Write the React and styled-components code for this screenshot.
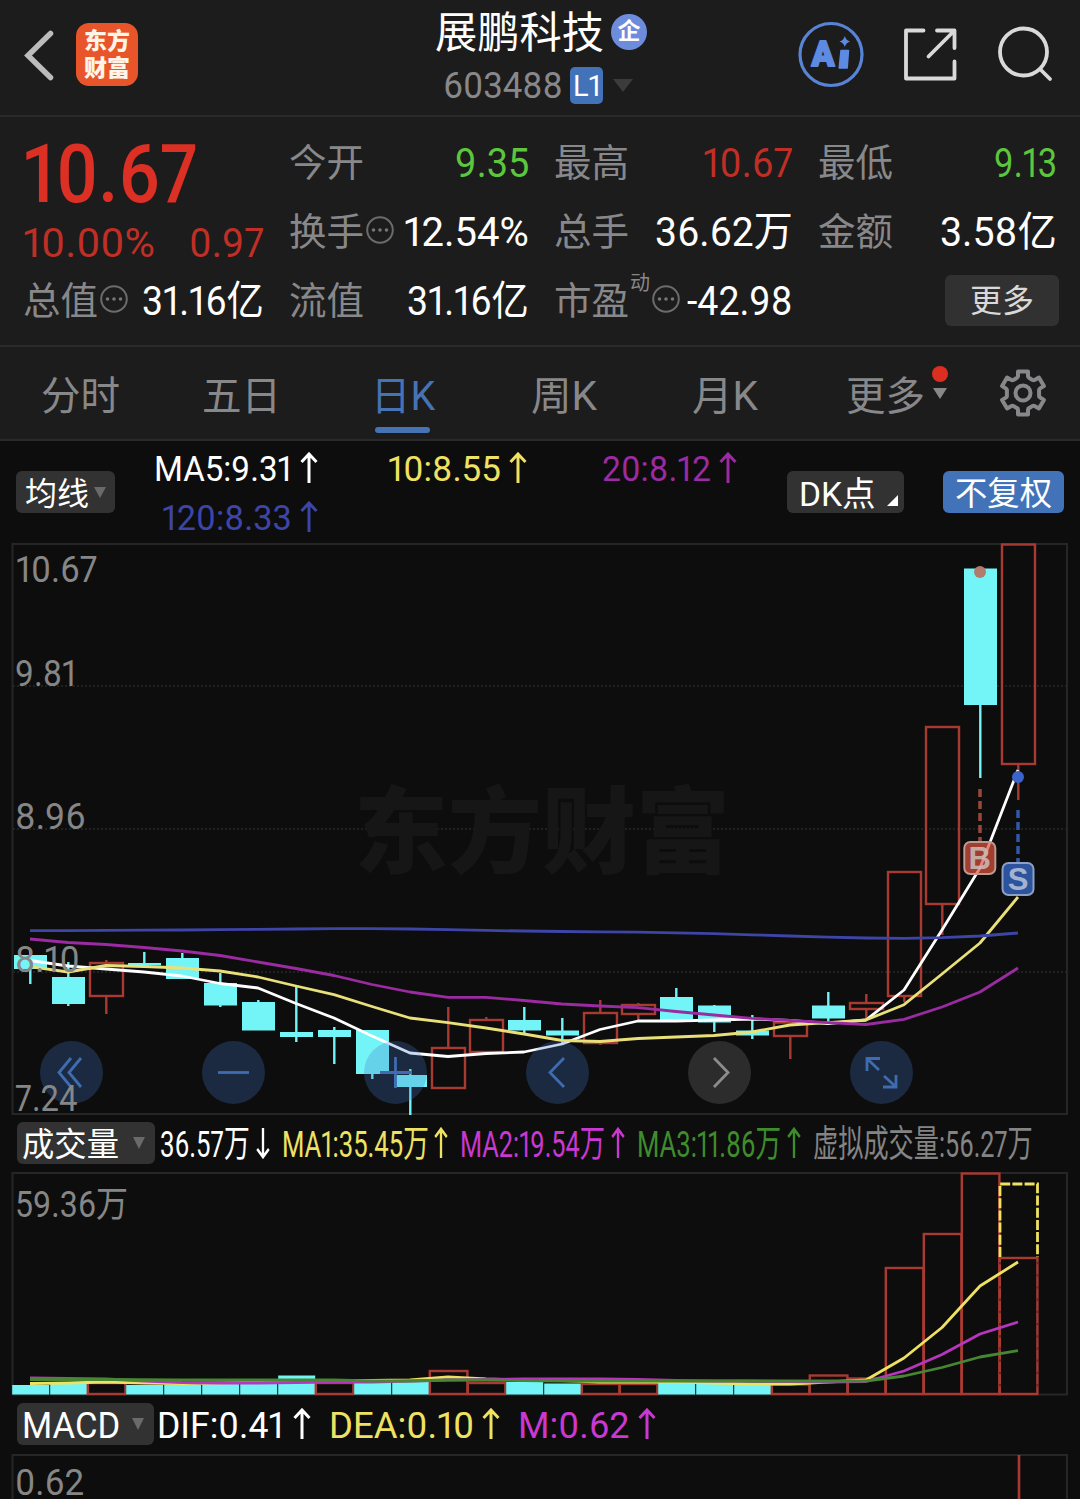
import React, { useLayoutEffect, useRef, useState } from 'react';
import styled, { createGlobalStyle, css } from 'styled-components';

const GlobalStyle = createGlobalStyle`
  body {
    margin: 0;
    background: #0d0d0d;
    color: #fff;
    font-family: Roboto, 'Noto Sans CJK SC', sans-serif;
    font-variant-numeric: proportional-nums;
  }
`;

const color = {
  panel: '#1c1c1c',
  line: '#2a2a2a',
  label: '#88888a',
  red: '#bf2f26',
  green: '#5cc63c',
  blue: '#4273b9',
  yellow: '#efe262',
  magenta: '#c938d1',
  purple: '#9a2ba1',
  navy: '#3d45a6',
  lime: '#3f8c2c',
  cyan: '#73f5f7',
  candle: '#a83a32',
};

const FitBox = styled.span`
  display: block;
  flex: none;
  white-space: nowrap;
  width: ${(p) => p.$w}px;
  margin-left: ${(p) => p.$ml || 0}px;
  padding-top: var(--drop, 5px);
  font-size: ${(p) => p.$size}px;
  font-weight: ${(p) => p.$weight || 400};
  line-height: ${(p) => p.$lh || 1.1};
  color: ${(p) => p.$color || 'inherit'};
`;

const FitInner = styled.span`
  display: inline-block;
  transform-origin: left center;
`;

// squeezes a text horizontally so that it takes exactly w pixels
function Fit({ w, size, c, ml, lh, weight, children }) {
  const ref = useRef(null);
  const [scale, setScale] = useState(1);
  useLayoutEffect(() => {
    setScale(w / ref.current.offsetWidth);
  }, [w, children]);
  return (
    <FitBox $w={w} $size={size} $color={c} $ml={ml} $lh={lh} $weight={weight}>
      <FitInner ref={ref} style={{ transform: `scaleX(${scale})` }}>
        {children}
      </FitInner>
    </FitBox>
  );
}

const Page = styled.div`
  width: 1080px;
  height: 1499px;
  overflow: hidden;
  display: flex;
  flex-direction: column;
`;

/* header */

const Header = styled.header`
  box-sizing: border-box;
  height: 117px;
  flex: none;
  display: grid;
  grid-template-columns: 432px 1fr 290px;
  background: ${color.panel};
  border-bottom: 2px solid ${color.line};
`;

const HeaderLeft = styled.div`
  display: flex;
  align-items: center;
  gap: 22px;
  padding: 0 0 6px 22px;
`;

const Logo = styled.div`
  box-sizing: border-box;
  width: 62px;
  height: 63px;
  padding-top: 6px;
  border-radius: 13px;
  background: #e8552a;
  color: #fff4e6;
  font-size: 23px;
  line-height: 26.5px;
  font-weight: 900;
  text-align: center;
`;

const Title = styled.div`
  padding-top: 9px;
`;

const TitleRow = styled.div`
  --drop: 4px;
  display: flex;
  align-items: center;
  height: ${(p) => p.$h}px;
  padding-left: ${(p) => p.$pl || 0}px;
`;

const CorpBadge = styled.span`
  width: 36px;
  height: 36px;
  margin-left: 7px;
  border-radius: 50%;
  background: #6d8cdc;
  font-size: 23px;
  font-weight: 700;
  line-height: 36px;
  text-align: center;
`;

const Level = styled.span`
  --drop: 0px;
  display: flex;
  align-items: center;
  justify-content: center;
  width: 33px;
  height: 37px;
  margin: 0 10px 0 7px;
  border-radius: 5px;
  background: #4273b9;
`;

const HeaderRight = styled.div`
  padding-top: 15px;
`;

/* quote */

const Quote = styled.section`
  --drop: 2px;
  box-sizing: border-box;
  height: 230px;
  flex: none;
  display: grid;
  grid-template-columns: 241px 240px 239px 239px;
  grid-template-rows: 69px 69px 69px;
  column-gap: 25px;
  padding: 11px 23px 0;
  background: ${color.panel};
  border-bottom: 2px solid ${color.line};
`;

const PriceBlock = styled.div`
  grid-row: span 2;
  display: flex;
  flex-direction: column;
`;

const PriceRow = styled.div`
  display: flex;
  align-items: center;
  justify-content: space-between;
  height: ${(p) => p.$h}px;
`;

const Cell = styled.div`
  display: flex;
  align-items: center;
  justify-content: space-between;
`;

const Label = styled.div`
  display: flex;
  align-items: center;
  color: ${color.label};
  svg { margin-left: 2px; margin-bottom: 3px; }
`;

const Sup = styled.sup`
  align-self: flex-start;
  margin-top: -6px;
  margin-left: 1px;
  font-size: 20px;
  line-height: 20px;
`;

const MoreButton = styled.button`
  justify-self: end;
  align-self: center;
  margin-right: -2px;
  width: 114px;
  height: 51px;
  padding: 0;
  border: 0;
  border-radius: 6px;
  background: #313131;
  color: #d9d9d9;
  font: 400 32px 'Noto Sans CJK SC', sans-serif;
  line-height: 44px;
  padding-bottom: 5px;
`;

/* tabs */

const Tabs = styled.nav`
  --drop: 12px;
  box-sizing: border-box;
  height: 94px;
  flex: none;
  display: flex;
  background: ${color.panel};
  border-bottom: 2px solid ${color.line};
`;

const Tab = styled.div`
  position: relative;
  display: flex;
  justify-content: center;
  align-items: center;
  width: 161px;
  padding-bottom: 4px;
  color: ${color.label};
  ${(p) => p.$active && css`
    color: #4673b4;
    &::after {
      content: '';
      position: absolute;
      left: 53px;
      bottom: 6px;
      width: 55px;
      height: 6px;
      border-radius: 3px;
      background: #4673b4;
    }
  `}
`;

const RedDot = styled.i`
  position: absolute;
  left: 127px;
  top: 19px;
  width: 16px;
  height: 16px;
  border-radius: 50%;
  background: #dc2f22;
`;

const TabCaret = styled.i`
  position: absolute;
  left: 128px;
  top: 41px;
  border: 7px solid transparent;
  border-top: 11px solid ${color.label};
  border-bottom: 0;
`;

const GearBox = styled.div`
  width: 114px;
  display: flex;
  align-items: center;
  justify-content: center;
`;

/* indicator rows */

const Legend = styled.div`
  box-sizing: border-box;
  flex: none;
  height: ${(p) => p.$h}px;
  display: flex;
  align-items: center;
  padding-left: 16px;
  padding-right: 16px;
`;

const Chip = styled.div`
  box-sizing: border-box;
  flex: none;
  display: flex;
  align-items: center;
  width: ${(p) => p.$w}px;
  height: 42px;
  margin-left: ${(p) => p.$ml || 0}px;
  padding-left: ${(p) => p.$pl}px;
  border-radius: 6px;
  background: ${(p) => p.$bg || '#323232'};
`;

const Caret = styled.i`
  margin-left: ${(p) => p.$ml}px;
  border: ${(p) => p.$s || 6.5}px solid transparent;
  border-top: ${(p) => p.$t || 12}px solid ${(p) => p.$color || '#6a6a6a'};
  border-bottom: 0;
`;

const Corner = styled.i`
  align-self: flex-end;
  margin: 0 0 7px 11px;
  border-left: 11px solid transparent;
  border-bottom: 11px solid #fff;
`;

const Averages = styled.div`
  display: grid;
  grid-template-columns: 232px 215px 185px;
  grid-auto-rows: 49px;
  margin-left: 39px;
  width: 632px;
`;

const Item = styled.div`
  display: flex;
  align-items: center;
  color: ${(p) => p.$color};
`;

const ArrowSvg = styled.svg`
  flex: none;
  margin-left: ${(p) => p.$ml}px;
  ${(p) => p.$down && 'transform: rotate(180deg);'}
`;

function Arrow({ ml, w = 18, down }) {
  return (
    <ArrowSvg $ml={ml} $down={down} width={w} height="32" viewBox="0 0 18 32" preserveAspectRatio="none"
      fill="none" stroke="currentColor" strokeWidth="3">
      <path d="M9 31V2M1.5 10L9 2l7.5 8" />
    </ArrowSvg>
  );
}

/* charts */

const ChartBox = styled.div`
  --drop: 0px;
  position: relative;
  flex: none;
  height: ${(p) => p.$h}px;
  svg { display: block; }
`;

const Controls = styled.div`
  position: absolute;
  left: 40px;
  top: 498px;
  display: flex;
  gap: 99px;
`;

const RoundButton = styled.div`
  width: 63px;
  height: 63px;
  border-radius: 50%;
  background: ${(p) => (p.$off ? 'rgba(125, 125, 125, 0.28)' : 'rgba(66, 118, 196, 0.28)')};
  color: ${(p) => (p.$off ? '#8c8c8c' : '#3f6cb0')};
`;

const PriceLabels = styled.div`
  position: absolute;
  left: 15px;
  top: ${(p) => p.$top}px;
  color: #868686;
`;

const X = (i) => 30 + i * 38;

// [up, body top, body bottom, high, low]
const candles = [
  [0, 955, 969, 950, 984], [0, 977, 1004, 962, 1006], [1, 963, 996, 960, 1014],
  [0, 963, 965.5, 952, 965], [0, 958, 979, 953, 979], [0, 983, 1005.5, 973, 1007],
  [0, 1002, 1030.5, 1000, 1030], [0, 1032, 1037, 987, 1042], [0, 1030, 1037, 1027, 1064],
  [0, 1030, 1074, 1030, 1079], [0, 1075, 1087, 1069, 1115], [1, 1048, 1088, 1007, 1089],
  [1, 1020, 1052, 1017, 1052], [0, 1020, 1030.5, 1007, 1035], [0, 1030.5, 1035.5, 1018, 1043],
  [1, 1013, 1043, 1000, 1045], [1, 1005, 1014, 1003, 1020], [0, 997, 1020, 988, 1020],
  [0, 1005.5, 1022.5, 1005, 1032], [0, 1030.5, 1035.5, 1015, 1039], [1, 1022.5, 1036, 1019, 1059],
  [0, 1005.5, 1018.5, 992, 1022], [1, 1003, 1009, 994, 1020], [1, 872, 996, 872, 1002],
  [1, 727, 904, 727, 935], [0, 568.5, 705, 568, 778], [1, 544.5, 764, 545, 800],
];

const ma5 = [960.5, 966, 969, 972, 976, 983.5, 988, 1003.5, 1018, 1036, 1053, 1056.5, 1053.5, 1052, 1044, 1029.5, 1021, 1021, 1020, 1019, 1020.5, 1023.5, 1020, 990, 930, 868, 770];
const ma10 = [966.7, 972, 965.5, 966.5, 968, 971, 977, 986, 994.7, 1006.5, 1018, 1022.7, 1028, 1034, 1040.5, 1041.5, 1038.5, 1037, 1035.5, 1032, 1025, 1022.7, 1020, 1004.7, 974, 943, 897];
const ma20 = [939, 942.5, 944.5, 947.5, 951, 955.5, 962, 968.5, 975.5, 984.5, 992, 997.3, 997.3, 1000.5, 1004, 1006, 1007.7, 1011.5, 1015, 1018.3, 1020.5, 1022.7, 1024.5, 1019.3, 1007, 992, 968];
const ma120 = [930.7, 930.6, 930.4, 930.2, 930, 929.6, 929.3, 929, 928.7, 928.6, 929, 929.7, 930.4, 931, 931.5, 931.8, 932.2, 932.8, 933.7, 934.8, 936, 937.2, 938, 938.3, 937.6, 936, 933];

const volumes = [
  [0, 1385], [0, 1384], [1, 1383], [0, 1385], [0, 1384.5], [0, 1384], [0, 1383], [0, 1375.5], [1, 1383],
  [0, 1382], [0, 1382], [1, 1371], [1, 1383], [0, 1382], [0, 1383.5], [1, 1384], [1, 1384], [0, 1383],
  [0, 1383.5], [0, 1385], [1, 1384.5], [1, 1375.5], [1, 1378.5], [1, 1268], [1, 1234], [1, 1173.5], [1, 1258],
];

const v1 = [1383.5, 1383, 1382, 1383, 1383.5, 1383, 1382, 1380.5, 1380.5, 1380.5, 1380, 1377, 1379, 1380, 1380.5, 1382, 1382, 1382, 1383, 1384, 1384, 1382, 1380, 1358, 1327.5, 1286, 1262];
const v2 = [1378, 1378.5, 1379, 1381, 1382.5, 1383, 1383, 1382.5, 1382, 1382, 1381, 1380, 1379.5, 1379, 1379, 1379, 1379.5, 1380.5, 1381, 1381, 1381.5, 1382, 1381.5, 1371, 1354.5, 1334, 1322];
const v3 = [1379.5, 1379.5, 1379.5, 1379.7, 1380, 1380, 1380, 1380, 1380, 1381, 1381, 1380, 1380, 1380.5, 1381, 1381, 1381, 1381, 1381, 1381, 1381, 1381, 1381, 1376, 1367.5, 1357, 1350.7];

const Line = ({ ys, c }) => (
  <polyline points={ys.map((y, i) => `${X(i)},${y}`).join(' ')} fill="none" stroke={c} strokeWidth="2.8" strokeLinejoin="round" />
);

function Marker({ x, y, fill, stroke, letter, ink }) {
  return (
    <g>
      <rect x={x - 15.5} y={y} width="31" height="32" rx="6" fill={fill} fillOpacity="0.7" stroke={stroke} strokeWidth="2" />
      <text x={x} y={y + 27} textAnchor="middle" fontFamily="Liberation Sans" fontWeight="700" fontSize="31" fill={ink} fillOpacity="0.9">{letter}</text>
    </g>
  );
}

function PriceChart() {
  return (
    <svg width="1080" height="573" viewBox="0 543 1080 573">
      <rect x="12.5" y="544" width="1054.5" height="570" fill="none" stroke="#262626" strokeWidth="2" />
      {[686, 829, 972].map((y) => (
        <path key={y} d={`M13 ${y}H1067`} stroke="#282828" strokeWidth="1.5" strokeDasharray="2 2" />
      ))}
      <text x="354" y="866" fontSize="94" fontWeight="900" fontFamily="Noto Sans CJK SC" fill="#161616">东方财富</text>
      {candles.map(([up, top, bottom, high, low], i) => {
        const x = X(i) + 0.3;
        return up ? (
          <g key={i} stroke={color.candle} strokeWidth="2.4" fill="none">
            <rect x={x - 16.3} y={top} width="33" height={bottom - top} />
            <path d={`M${x} ${high}V${top}M${x} ${bottom}V${low}`} />
          </g>
        ) : (
          <g key={i}>
            <rect x={x - 16.3} y={top} width="33" height={bottom - top} fill={color.cyan} />
            <path d={`M${x} ${high}V${low}`} stroke={color.cyan} strokeWidth="2.4" />
          </g>
        );
      })}
      <Line ys={ma5} c="#fff" />
      <Line ys={ma10} c="#eae07a" />
      <Line ys={ma20} c={color.purple} />
      <Line ys={ma120} c={color.navy} />
      <path d="M980 789V841" stroke="#98483a" strokeWidth="3.5" strokeDasharray="8 4" />
      <path d="M1018 810V862" stroke="#2f58a6" strokeWidth="3.5" strokeDasharray="8 4" />
      <circle cx="980" cy="572" r="6" fill="#b27c6d" />
      <circle cx="1018" cy="777" r="6" fill="#3b63c9" />
      <Marker x={979.8} y={842} fill="#e3543f" stroke="#bd9a92" letter="B" ink="#cdb9b5" />
      <Marker x={1018} y={863} fill="#3a72dc" stroke="#8d9fc4" letter="S" ink="#b4c0d8" />
    </svg>
  );
}

function VolumeChart() {
  return (
    <svg width="1080" height="224" viewBox="0 1172 1080 224">
      <rect x="12.5" y="1173" width="1054.5" height="221.5" fill="none" stroke="#262626" strokeWidth="2" />
      {volumes.map(([up, top], i) => {
        const x = 11.8 + i * 38;
        return up ? (
          <rect key={i} x={x} y={top} width="37.6" height={1394 - top} fill="none" stroke={color.candle} strokeWidth="2.4" />
        ) : (
          <rect key={i} x={x + 0.4} y={top} width="37" height={1394.5 - top} fill={color.cyan} />
        );
      })}
      <path d="M1000 1257V1184H1037.5V1257" fill="none" stroke={color.yellow} strokeWidth="2.8" strokeDasharray="10 2.2" />
      <path d="M1000 1262V1394M1037.5 1262V1394" fill="none" stroke="#5e2a22" strokeWidth="2" strokeDasharray="2.2 10" />
      <Line ys={v1} c={color.yellow} />
      <Line ys={v2} c="#b835be" />
      <Line ys={v3} c="#478632" />
    </svg>
  );
}

const Dots = () => (
  <svg width="28" height="28" viewBox="0 0 28 28" fill="none" stroke="#6b6b6d" strokeWidth="2">
    <circle cx="14" cy="14" r="12.8" />
    <path d="M7.5 14h0M14 14h0M20.5 14h0" strokeWidth="3.6" strokeLinecap="round" stroke="#77777a" />
  </svg>
);

const Gear = () => (
  <svg width="50" height="50" viewBox="0 0 50 50" fill="none" stroke={color.label} strokeWidth="4">
    <path strokeLinejoin="round" d="M20 3.5h10v4.8a2 2 0 0 0 1.3 1.8l3.2 1.8a2 2 0 0 0 2.1 0l4.3-2.4 5 8.6-3.8 2.3a2 2 0 0 0-1 1.8v5.6a2 2 0 0 0 1 1.8l3.8 2.3-5 8.6-4.3-2.4a2 2 0 0 0-2.1 0l-3.2 1.8a2 2 0 0 0-1.3 1.8v4.8H20v-4.8a2 2 0 0 0-1.3-1.8l-3.2-1.8a2 2 0 0 0-2.1 0l-4.3 2.4-5-8.6 3.8-2.3a2 2 0 0 0 1-1.8v-5.6a2 2 0 0 0-1-1.8l-3.8-2.3 5-8.6 4.3 2.4a2 2 0 0 0 2.1 0l3.2-1.8A2 2 0 0 0 20 8.3z" />
    <circle cx="25" cy="25" r="7.5" />
  </svg>
);

const HeaderIcons = () => (
  <svg width="290" height="80" viewBox="790 15 290 80" fill="none">
    <circle cx="831" cy="54.5" r="31" stroke="#5784d4" strokeWidth="3.2" />
    <text x="811.5" y="65.5" fontFamily="Roboto" fontWeight="900" fontSize="35.5" fill="#5d8ae2" stroke="#5d8ae2"
      strokeWidth="1.8" strokeLinejoin="round" textLength="23" lengthAdjust="spacingAndGlyphs">A</text>
    <path d="M841 50.500h7.500l-1.300 17.500h-8z" fill="#5d8ae2" stroke="#5d8ae2" strokeWidth="1.500" strokeLinejoin="round" />
    <path d="M844.800 36q1.200 4.500 5.400 5.500q-4.200 1-5.400 5.500q-1.200-4.500-5.400-5.500q4.200-1 5.400-5.500z" fill="#5d8ae2" />
    <g stroke="#d9d9d9" strokeWidth="3.8" strokeLinecap="round" strokeLinejoin="round">
      <path d="M923.500 30.500H906V78.500H954.500V61.500M937 30.500H954.500V48M953.500 31.500L928.500 56.500" />
      <circle cx="1023.500" cy="52" r="23.500" />
      <path d="M1040.500 69.500L1050 79" />
    </g>
  </svg>
);

const tabs = [['分时', 79], ['五日', 79], ['日K', 64], ['周K', 66], ['月K', 66], ['更多', 79]];

const icons = [
  'M31 17L19 31.500L31 46M41 17L29 31.500L41 46',
  'M16 31.500H47',
  'M16 31.500H47M31.500 16V47',
  'M38 17L24 31.500L38 46',
  'M26 17L40 31.500L26 46',
  'M17 30V17.500H30M18 18.500L29 29M46 34V46H33M45 45L34 35',
];

export default function App() {
  return (
    <Page>
      <GlobalStyle />
      <Header>
        <HeaderLeft>
          <svg width="32" height="54" viewBox="22 27 32 54" fill="none">
            <path d="M50.500 32.500L28 54.500L50.500 76.500" stroke="#bcbcbc" strokeWidth="5.500" strokeLinecap="round" />
          </svg>
          <Logo>东方<br />财富</Logo>
        </HeaderLeft>
        <Title>
          <TitleRow $h={46} $pl={3}>
            <Fit w={169} size={43}>展鹏科技</Fit>
            <CorpBadge>企</CorpBadge>
          </TitleRow>
          <TitleRow $h={60} $pl={11}>
            <Fit w={120} size={36} c={color.label}>603488</Fit>
            <Level><Fit w={28} size={30}>L1</Fit></Level>
            <Caret $ml={0} $s={10} $t={13} $color="#3b3b3b" />
          </TitleRow>
        </Title>
        <HeaderRight><HeaderIcons /></HeaderRight>
      </Header>

      <Quote>
        <PriceBlock>
          <PriceRow $h={91}><Fit w={175} size={81} weight={500} c="#dc3024">10.67</Fit></PriceRow>
          <PriceRow $h={47}>
            <Fit w={132} size={40} c={color.red}>10.00%</Fit>
            <Fit w={75} size={40} c={color.red}>0.97</Fit>
          </PriceRow>
        </PriceBlock>
        <Cell><Label><Fit w={75} size={38}>今开</Fit></Label><Fit w={74} size={41} c={color.green}>9.35</Fit></Cell>
        <Cell><Label><Fit w={75} size={38}>最高</Fit></Label><Fit w={90} size={41} c={color.red}>10.67</Fit></Cell>
        <Cell><Label><Fit w={75} size={38}>最低</Fit></Label><Fit w={63} size={41} c={color.green}>9.13</Fit></Cell>
        <Cell><Label><Fit w={75} size={38}>换手</Fit><Dots /></Label><Fit w={125} size={41}>12.54%</Fit></Cell>
        <Cell><Label><Fit w={75} size={38}>总手</Fit></Label><Fit w={138} size={41}>36.62万</Fit></Cell>
        <Cell><Label><Fit w={75} size={38}>金额</Fit></Label><Fit w={117} size={41}>3.58亿</Fit></Cell>
        <Cell><Label><Fit w={75} size={38}>总值</Fit><Dots /></Label><Fit w={122} size={41}>31.16亿</Fit></Cell>
        <Cell><Label><Fit w={75} size={38}>流值</Fit></Label><Fit w={122} size={41}>31.16亿</Fit></Cell>
        <Cell>
          <Label><Fit w={75} size={38}>市盈</Fit><Sup>动</Sup><Dots /></Label>
          <Fit w={106} size={41}>-42.98</Fit>
        </Cell>
        <MoreButton>更多</MoreButton>
      </Quote>

      <Tabs>
        {tabs.map(([name, w], i) => (
          <Tab key={name} $active={i === 2}>
            <Fit w={w} size={40}>{name}</Fit>
            {i === 5 && <><RedDot /><TabCaret /></>}
          </Tab>
        ))}
        <GearBox><Gear /></GearBox>
      </Tabs>

      <Legend $h={102}>
        <Chip $w={99} $pl={9}><Fit w={64} size={32}>均线</Fit><Caret $ml={5} $t={11} /></Chip>
        <Averages>
          <Item $color="#fff"><Fit w={138} size={35}>MA5:9.31</Fit><Arrow ml={8} /></Item>
          <Item $color={color.yellow}><Fit w={113} ml={2} size={35}>10:8.55</Fit><Arrow ml={8} /></Item>
          <Item $color={color.purple}><Fit w={109} ml={1} size={35}>20:8.12</Fit><Arrow ml={8} /></Item>
          <Item $color={color.navy}><Fit w={130} ml={8} size={35}>120:8.33</Fit><Arrow ml={8} /></Item>
        </Averages>
        <Chip $w={117} $ml={0.5} $pl={12}><Fit w={77} size={34}>DK点</Fit><Corner /></Chip>
        <Chip $w={121} $ml={39.5} $pl={12} $bg="#4273b9"><Fit w={97} size={33}>不复权</Fit></Chip>
      </Legend>

      <ChartBox $h={571}>
        <PriceChart />
        <Controls>
          {icons.map((d, i) => (
            <RoundButton key={d} $off={i === 4}>
              <svg width="63" height="63" fill="none" stroke="currentColor" strokeWidth="2.800"><path d={d} /></svg>
            </RoundButton>
          ))}
        </Controls>
        <PriceLabels $top={7}><Fit w={82} ml={1} size={37}>10.67</Fit></PriceLabels>
        <PriceLabels $top={111}><Fit w={62} size={37}>9.81</Fit></PriceLabels>
        <PriceLabels $top={254}><Fit w={71} size={37}>8.96</Fit></PriceLabels>
        <PriceLabels $top={397}><Fit w={65} size={37}>8.10</Fit></PriceLabels>
        <PriceLabels $top={536}><Fit w={62} size={37}>7.24</Fit></PriceLabels>
      </ChartBox>

      <Legend $h={58}>
        <Chip $w={138} $pl={5} $ml={0.5}><Fit w={97} size={33}>成交量</Fit><Caret $ml={14} /></Chip>
        <Item $color="#fff"><Fit w={90} ml={5} size={37}>36.57万</Fit><Arrow ml={6} w={14} down /></Item>
        <Item $color={color.yellow}><Fit w={147} ml={12} size={37}>MA1:35.45万</Fit><Arrow ml={5} w={14} /></Item>
        <Item $color={color.magenta}><Fit w={145} ml={12} size={37}>MA2:19.54万</Fit><Arrow ml={6} w={14} /></Item>
        <Item $color={color.lime}><Fit w={144} ml={12} size={37}>MA3:11.86万</Fit><Arrow ml={6} w={14} /></Item>
        <Item $color="#848484"><Fit w={220} ml={12} size={37}>虚拟成交量:56.27万</Fit></Item>
      </Legend>

      <ChartBox $h={222}>
        <VolumeChart />
        <PriceLabels $top={14}><Fit w={113} size={36}>59.36万</Fit></PriceLabels>
      </ChartBox>

      <Legend $h={60}>
        <Chip $w={137} $pl={5} $ml={0.5}><Fit w={98} size={36}>MACD</Fit><Caret $ml={12} /></Chip>
        <Item $color="#fff"><Fit w={127} ml={3} size={37}>DIF:0.41</Fit><Arrow ml={9} /></Item>
        <Item $color={color.yellow}><Fit w={145} ml={18} size={37}>DEA:0.10</Fit><Arrow ml={8} /></Item>
        <Item $color={color.magenta}><Fit w={112} ml={18} size={37}>M:0.62</Fit><Arrow ml={8} /></Item>
      </Legend>

      <ChartBox $h={46}>
        <svg width="1080" height="46" viewBox="0 1453 1080 46">
          <path d="M12.500 1499V1454H1067V1499" fill="none" stroke="#262626" strokeWidth="2" />
          <path d="M1019 1454V1499" stroke={color.candle} strokeWidth="2.600" />
        </svg>
        <PriceLabels $top={13}><Fit w={69} size={37} lh={0.85}>0.62</Fit></PriceLabels>
      </ChartBox>
    </Page>
  );
}
